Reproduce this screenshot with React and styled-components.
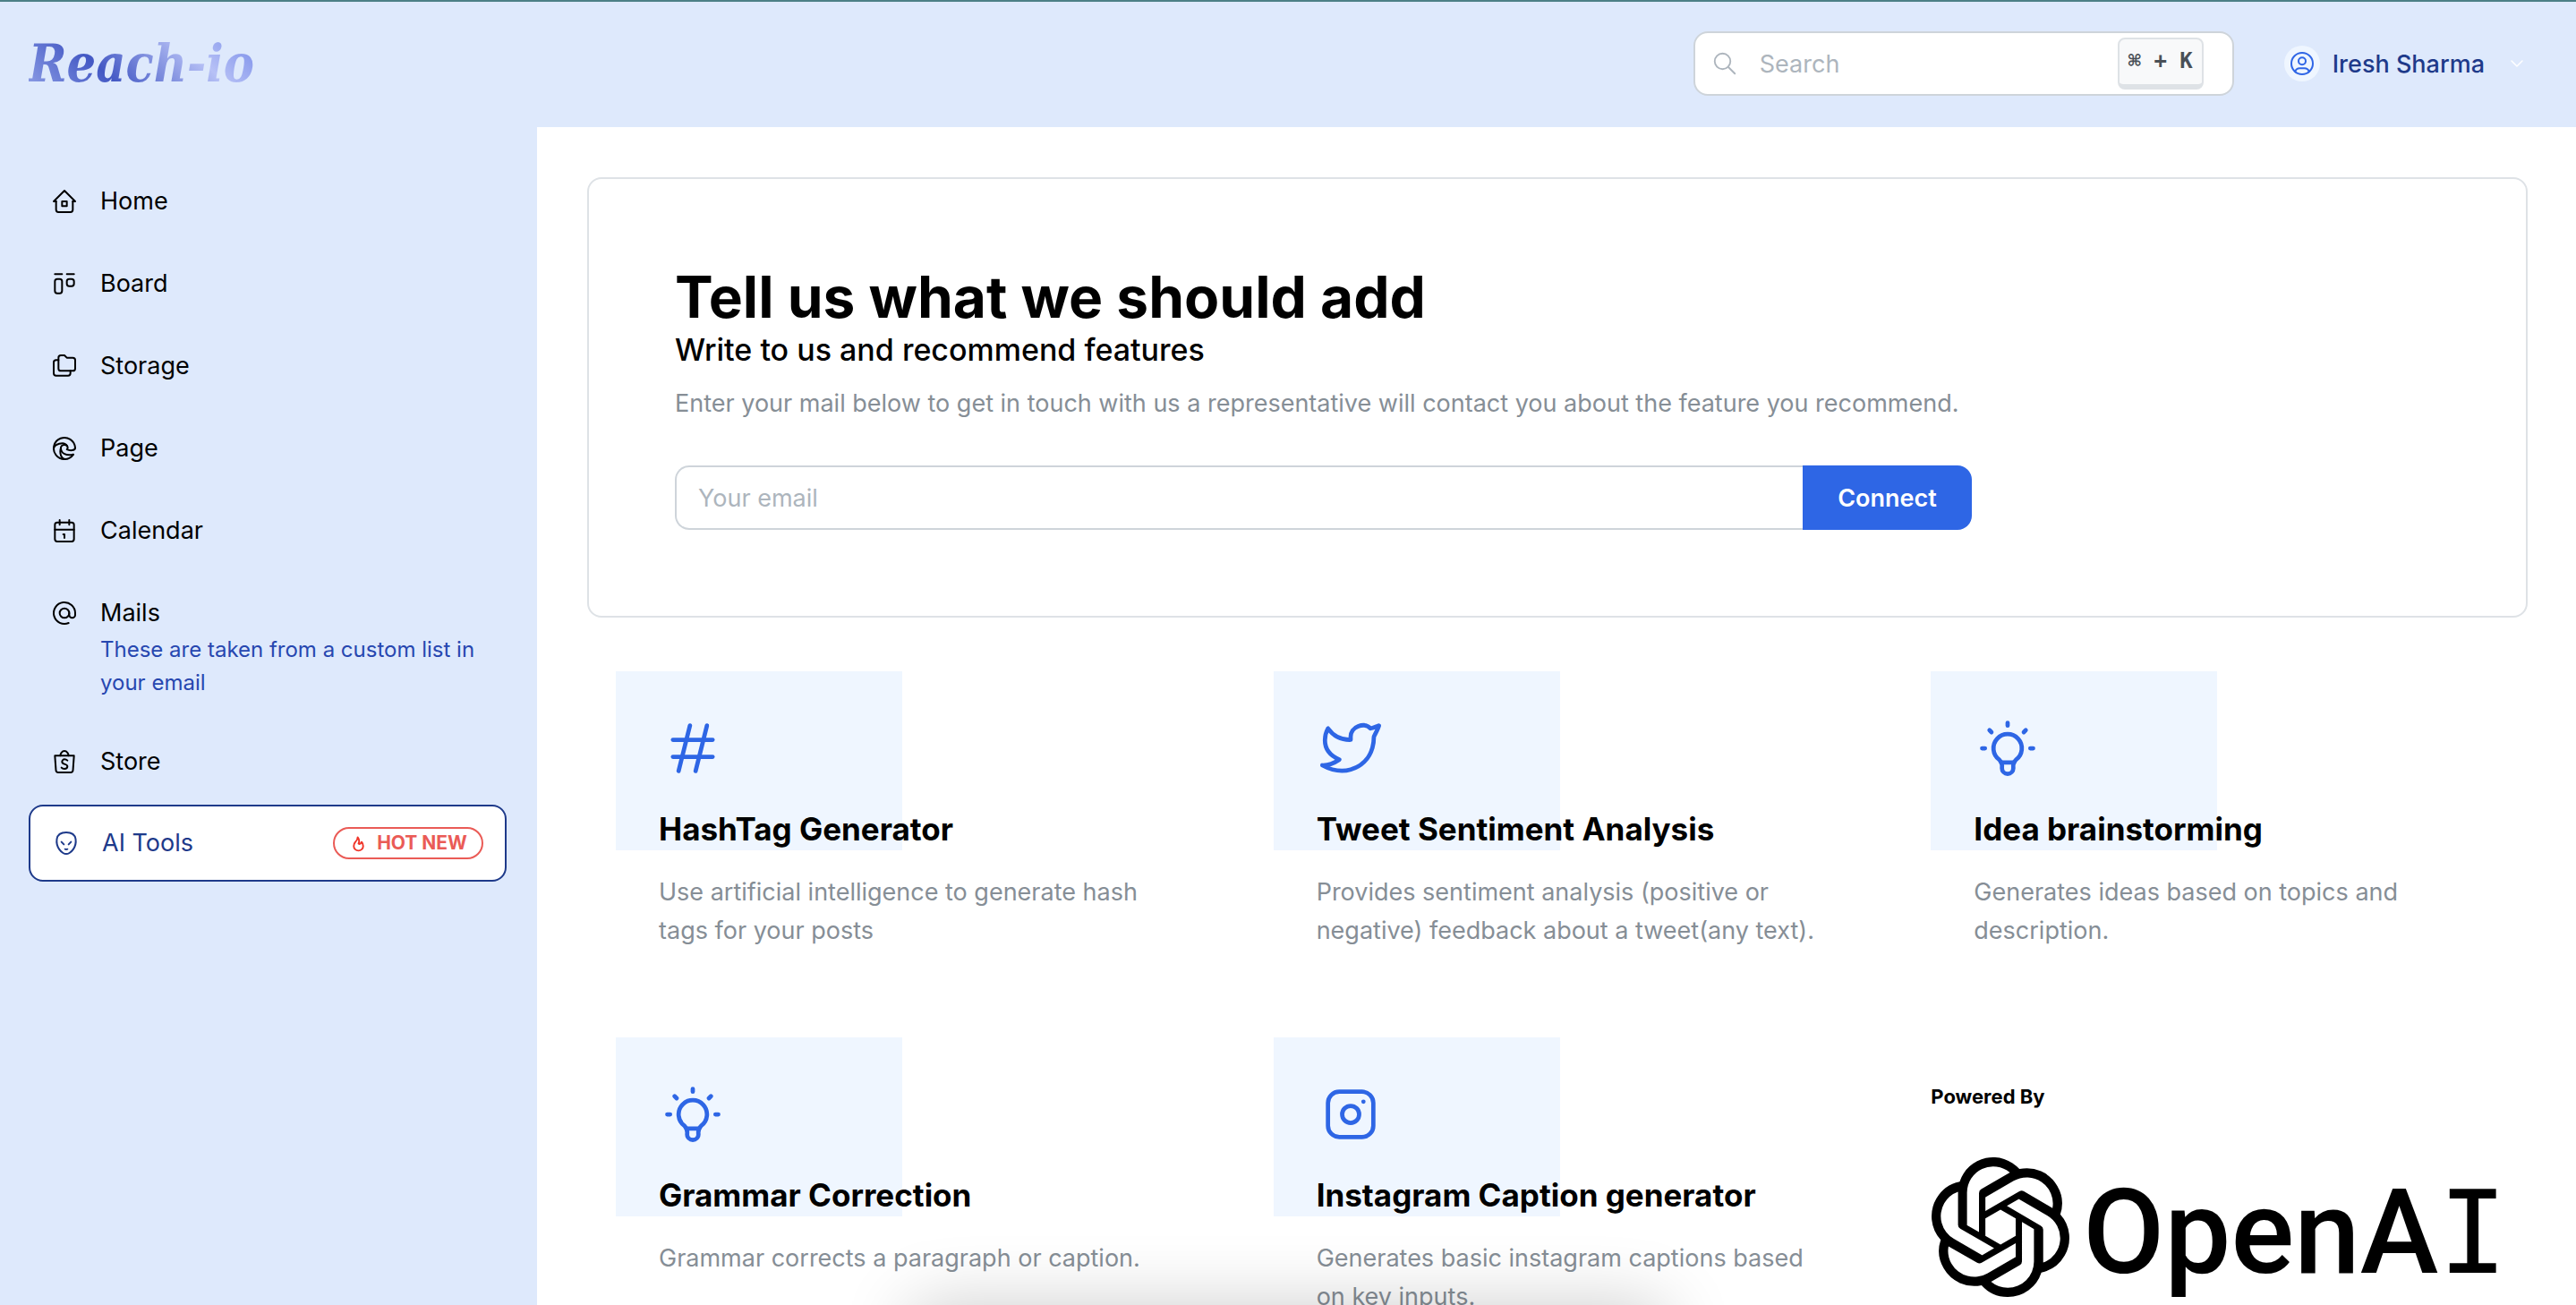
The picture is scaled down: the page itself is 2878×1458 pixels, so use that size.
import styled, { createGlobalStyle } from 'styled-components';
import {
  TbAlien,
  TbAt,
  TbBrandEdge,
  TbBrandInstagram,
  TbBrandShopee,
  TbBrandTwitter,
  TbBulb,
  TbChevronDown,
  TbFolders,
  TbHash,
  TbHome2,
  TbLayoutKanban,
  TbSearch,
  TbUserCircle,
} from 'react-icons/tb';
import { SiOpenai } from 'react-icons/si';

const GlobalStyle = createGlobalStyle`
  * {
    box-sizing: border-box;
  }
  body {
    margin: 0;
    background: #fff;
    color: #000;
    font-family: Inter, 'Liberation Sans', sans-serif;
    font-size: 27px;
    line-height: 43px;
  }
  h1, h2, h3, p {
    margin: 0;
  }
  a {
    color: inherit;
    text-decoration: none;
  }
  input, button {
    font: inherit;
  }
  input::placeholder {
    color: #adb5bd;
    opacity: 1;
  }
`;

// Styled Components
const Page = styled.div`
  height: 100vh;
  display: flex;
  flex-direction: column;
  overflow: hidden;
  border-top: 2px solid #4c7f86;
`;

const Header = styled.header`
  flex: none;
  height: 140px;
  padding: 0 54px 2px 32px;
  display: flex;
  align-items: center;
  gap: 56px;
  background: #dee9fc;
`;

const Logo = styled.a`
  margin-right: auto;
  font-family: 'DejaVu Serif Condensed', 'DejaVu Serif', serif;
  font-size: 57px;
  font-weight: 700;
  font-style: italic;
  line-height: 72px;
  color: transparent;
  background: linear-gradient(45deg, #93a3e8 0%, #4358c4 34%, #b7c1f6 72%, #7f92ea 95%);
  background-clip: text;
`;

const SearchBox = styled.label`
  width: 604px;
  height: 72px;
  padding: 0 32px 0 18px;
  display: flex;
  align-items: center;
  gap: 24px;
  background: #fff;
  border: 2px solid #ced4da;
  border-radius: 16px;
  color: #adb5bd;
  svg {
    flex: none;
  }
  input {
    flex: 1;
    min-width: 0;
    padding: 0;
    border: 0;
    outline: 0;
    background: none;
  }
`;

const Kbd = styled.kbd`
  height: 58px;
  padding: 0 10px;
  background: #f8f9fa;
  border: 2px solid #dee2e6;
  border-bottom-width: 6px;
  border-radius: 8px;
  color: #495057;
  font-family: 'DejaVu Sans Mono', 'Liberation Mono', monospace;
  font-size: 24px;
  font-weight: 700;
  line-height: 48px;
  white-space: pre;
`;

const UserButton = styled.button`
  padding: 0;
  display: flex;
  align-items: center;
  gap: 14px;
  border: 0;
  background: none;
  color: #1e3a8a;
  font-weight: 500;
`;

const Avatar = styled.span`
  width: 40px;
  height: 40px;
  display: grid;
  place-items: center;
  border-radius: 50%;
  background: #eff6ff;
  color: #2f66e6;
`;

const Chevron = styled(TbChevronDown)`
  margin-left: 10px;
  color: #fff;
`;

const Body = styled.div`
  flex: 1;
  min-height: 0;
  display: flex;
`;

const Sidebar = styled.nav`
  flex: none;
  width: 600px;
  padding: 37px 34px 0 32px;
  background: #dee9fc;
`;

const NavItem = styled.a`
  padding: ${({ $active }) => ($active ? '19px 24px' : '24px')};
  margin-top: ${({ $active }) => ($active ? '2px' : '0')};
  display: flex;
  align-items: flex-start;
  gap: 24px;
  line-height: 44px;
  border: ${({ $active }) => ($active ? '2px solid #1e3a8a' : '0')};
  border-radius: 16px;
  background: ${({ $active }) => ($active ? '#fff' : 'none')};
  color: ${({ $active }) => ($active ? '#1e3a8a' : '#000')};
`;

const NavIcon = styled.span`
  height: 44px;
  display: flex;
  align-items: center;
`;

const NavText = styled.span`
  flex: 1;
`;

const NavNote = styled.span`
  display: block;
  font-size: 24px;
  line-height: 37px;
  color: #2747b0;
`;

const Badge = styled.span`
  width: 168px;
  height: 36px;
  align-self: center;
  display: flex;
  align-items: center;
  justify-content: center;
  gap: 10px;
  border: 2px solid #ea5b56;
  border-radius: 18px;
  color: #ea5b56;
  font-size: 21px;
  font-weight: 700;
  line-height: 32px;
  svg {
    color: #f03529;
  }
`;

const Main = styled.main`
  flex: 1;
  min-width: 0;
  padding: 56px 54px 0 56px;
  overflow: hidden;
`;

const Card = styled.section`
  padding: 96px;
  border: 2px solid #dee2e6;
  border-radius: 16px;
`;

const CardBody = styled.div`
  max-width: 1449px;
`;

const Title = styled.h1`
  font-size: 64px;
  font-weight: 700;
  line-height: 72px;
`;

const Subtitle = styled.h2`
  margin-bottom: 15px;
  font-size: 34px;
  font-weight: 500;
  line-height: 46px;
`;

const Muted = styled.p`
  color: #868e96;
`;

const EmailForm = styled.form`
  margin-top: 48px;
  display: flex;
  height: 72px;
  input {
    flex: 1;
    min-width: 0;
    padding: 0 24px;
    border: 2px solid #ced4da;
    border-right: 0;
    border-radius: 16px 0 0 16px;
    outline: 0;
  }
  button {
    width: 189px;
    border: 0;
    border-radius: 0 16px 16px 0;
    background: #2e66e5;
    color: #fff;
    font-weight: 600;
  }
`;

const Features = styled.section`
  margin-top: 60px;
  padding: 0 32px;
  display: grid;
  grid-template-columns: repeat(3, minmax(0, 1fr));
  gap: 50px 100px;
`;

const Feature = styled.article`
  padding: 48px 24px 48px 48px;
  background: linear-gradient(#eff6ff, #eff6ff) no-repeat 0 0 / 320px 200px;
  svg {
    display: block;
    color: #2e66e5;
  }
  h3 {
    margin: 30px 0 27px;
    font-size: 35px;
    font-weight: 700;
    line-height: 44px;
  }
`;

const Powered = styled.aside`
  padding-top: 48px;
  p {
    font-size: 22px;
    font-weight: 700;
    line-height: 36px;
  }
`;

const OpenAiLogo = styled.div`
  margin-top: 50px;
  display: flex;
  align-items: center;
  gap: 14px;
  svg {
    flex: none;
  }
`;

const Wordmark = styled.span`
  padding-top: 12px;
  font-family: Roboto, sans-serif;
  font-size: 132px;
  font-weight: 500;
  line-height: 128px;
  span {
    font-family: 'DejaVu Sans Mono', monospace;
    font-size: 128px;
  }
`;

// Soft shade that rises from the bottom edge of the window
const BottomShade = styled.div`
  position: fixed;
  top: 100%;
  left: 50%;
  width: 840px;
  height: 200px;
  margin-left: -420px;
  box-shadow: 0 0 80px rgba(0, 0, 0, 0.2);
  pointer-events: none;
`;

const CalendarIcon = () => (
  <svg width='32' height='32' viewBox='0 0 24 24' fill='none' stroke='currentColor' strokeWidth='1.5' strokeLinecap='round' strokeLinejoin='round'>
    <rect x='4' y='5' width='16' height='16' rx='2' />
    <path d='M16 3v4M8 3v4M4 11h16M11 15h1M12 15v3' />
  </svg>
);

const FlameIcon = () => (
  <svg width='21' height='21' viewBox='0 0 24 24' fill='none' stroke='currentColor' strokeWidth='2.2' strokeLinecap='round' strokeLinejoin='round'>
    <path d='M12 12c2 -2.96 0 -7 -1 -8c0 3.038 -1.773 4.741 -3 6c-1.226 1.26 -2 3.24 -2 5a6 6 0 1 0 12 0c0 -1.532 -1.056 -3.94 -2 -5c-1.786 3 -2.791 3 -4 2z' />
  </svg>
);

// Variables
const links = [
  { name: 'Home', Icon: TbHome2 },
  { name: 'Board', Icon: TbLayoutKanban },
  { name: 'Storage', Icon: TbFolders },
  { name: 'Page', Icon: TbBrandEdge },
  { name: 'Calendar', Icon: CalendarIcon },
  { name: 'Mails', Icon: TbAt, note: 'These are taken from a custom list in your email' },
  { name: 'Store', Icon: TbBrandShopee },
  { name: 'AI Tools', Icon: TbAlien, badge: 'HOT NEW', active: true },
];

const features = [
  { title: 'HashTag Generator', Icon: TbHash, text: 'Use artificial intelligence to generate hash tags for your posts' },
  {
    title: 'Tweet Sentiment Analysis',
    Icon: TbBrandTwitter,
    text: 'Provides sentiment analysis (positive or negative) feedback about a tweet(any text).',
  },
  { title: 'Idea brainstorming', Icon: TbBulb, text: 'Generates ideas based on topics and description.' },
  { title: 'Grammar Correction', Icon: TbBulb, text: 'Grammar corrects a paragraph or caption.' },
  {
    title: 'Instagram Caption generator',
    Icon: TbBrandInstagram,
    text: 'Generates basic instagram captions based on key inputs.',
  },
];

const App = () => (
  <Page>
    <GlobalStyle />
    <Header>
      <Logo href='#home'>Reach-io</Logo>
      <SearchBox>
        <TbSearch size={30} strokeWidth={1.5} />
        <input type='search' placeholder='Search' aria-label='Search' />
        <Kbd>⌘ + K</Kbd>
      </SearchBox>
      <UserButton type='button'>
        <Avatar>
          <TbUserCircle size={32} strokeWidth={1.5} />
        </Avatar>
        Iresh Sharma
        <Chevron size={24} strokeWidth={1.5} />
      </UserButton>
    </Header>

    <Body>
      <Sidebar>
        {links.map(({ name, Icon, note, badge, active }) => (
          <NavItem key={name} href={`#${name.toLowerCase().replace(' ', '-')}`} $active={active}>
            <NavIcon>
              <Icon size={32} strokeWidth={1.5} />
            </NavIcon>
            <NavText>
              {name}
              {note && <NavNote>{note}</NavNote>}
            </NavText>
            {badge && (
              <Badge>
                <FlameIcon />
                {badge}
              </Badge>
            )}
          </NavItem>
        ))}
      </Sidebar>

      <Main>
        <Card>
          <CardBody>
            <Title>Tell us what we should add</Title>
            <Subtitle>Write to us and recommend features</Subtitle>
            <Muted>
              Enter your mail below to get in touch with us a representative will contact you about the feature you
              recommend.
            </Muted>
            <EmailForm>
              <input type='email' placeholder='Your email' aria-label='Your email' />
              <button type='button'>Connect</button>
            </EmailForm>
          </CardBody>
        </Card>

        <Features>
          {features.map(({ title, Icon, text }) => (
            <Feature key={title}>
              <Icon size={76} strokeWidth={1.5} />
              <h3>{title}</h3>
              <Muted>{text}</Muted>
            </Feature>
          ))}
          <Powered>
            <p>Powered By</p>
            <OpenAiLogo>
              <SiOpenai size={156} />
              <Wordmark>
                OpenA<span>I</span>
              </Wordmark>
            </OpenAiLogo>
          </Powered>
        </Features>
      </Main>
    </Body>
    <BottomShade />
  </Page>
);

export default App;
